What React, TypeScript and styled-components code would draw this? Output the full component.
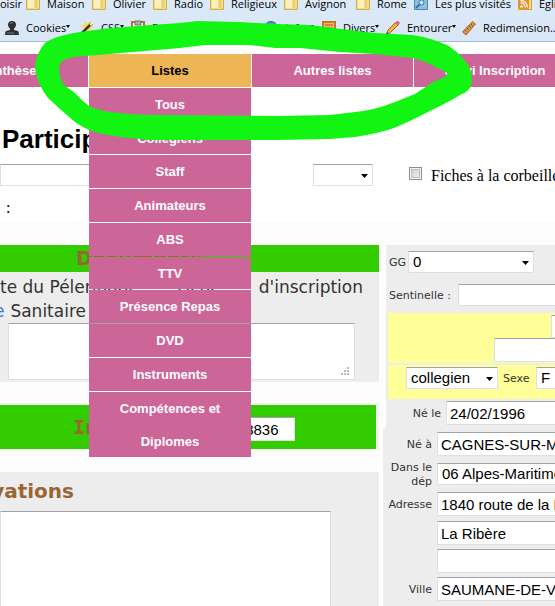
import React from "react";
import styled, { createGlobalStyle } from "styled-components";

const Global = createGlobalStyle`
  * { box-sizing: border-box; }
  html, body { margin: 0; height: 100%; overflow: hidden; background: #fff; }
  button, input, select, textarea { margin: 0; }
`;

const arial = '"Liberation Sans", Arial, sans-serif';
const verdana = '"DejaVu Sans", Verdana, sans-serif';

const Page = styled.div`
  position: relative;
  height: 100vh;
  overflow: hidden;
  background: #fff;
  font-family: ${arial};
`;

/* ---------- browser bookmarks ---------- */
const Bookmarks = styled.header`
  height: 42px;
  overflow: hidden;
  background: linear-gradient(#dce9f8, #d8e6f5);
  border-bottom: 1px solid #a5bbd6;
`;
const BookmarkRow = styled.div<{ $cols: string; $top?: boolean }>`
  display: grid;
  grid-template-columns: ${(p) => p.$cols};
  height: 20px;
  margin-top: ${(p) => (p.$top ? "-6px" : "4px")};
`;
const Bookmark = styled.button`
  display: flex;
  align-items: center;
  gap: 7px;
  min-width: 0;
  padding: 0;
  border: 0;
  background: none;
  color: #000;
  font: 11px/20px "Open Sans", "Noto Sans", sans-serif;
  white-space: nowrap;
  svg { flex: none; }
`;
const Caret = styled.span`
  display: inline-block;
  border: 2px solid transparent;
  border-top: 3px solid #000;
  border-bottom: 0;
  vertical-align: 4px;
`;

const Icon = ({ children }: { children: React.ReactNode }) => (
  <svg width="14" height="16" viewBox="0 0 14 16" aria-hidden="true">{children}</svg>
);
const Folder = () => (
  <Icon>
    <path d="M.5 2.500h9l1-2h3v13H.5z" fill="#f3dc86" stroke="#cfae4c" />
    <path d="M2 4h6v8H2z" fill="#fbf0bd" />
    <path d="M10 3v9" stroke="#e0c05e" />
  </Icon>
);
const Saved = () => (
  <Icon>
    <path d="M.5 2.500h9l1-2h3v13H.5z" fill="#8fc0e0" stroke="#4a86b4" />
    <circle cx="7.500" cy="6.500" r="2.500" fill="#d5ecf9" stroke="#37719f" />
    <path d="M5.500 8.500L2 12" stroke="#37719f" strokeWidth="2" />
  </Icon>
);
const Feed = () => (
  <Icon>
    <path d="M.5 2.500h9l1-2h3v13H.5z" fill="#f6df84" stroke="#c9a338" />
    <rect x="1" y="3" width="10" height="10" rx="1" fill="#ee8a2b" />
    <circle cx="3.500" cy="10.500" r="1.300" fill="#fff" />
    <path d="M2.500 7a4 4 0 0 1 4.500 4.500M2.500 4.500a7 7 0 0 1 7 7" fill="none" stroke="#fff" strokeWidth="1.300" />
  </Icon>
);
const Person = () => (
  <Icon>
    <path d="M7 1a4 4 0 0 1 4 4c0 2-2 3-2 4v1l4 1q1 1 1 4H0q0-3 1-4l4-1V9C5 8 3 7 3 5a4 4 0 0 1 4-4" fill="#2f3033" />
    <path d="M5 4q1-2 3-1M2 13h7" fill="none" stroke="#77797d" />
  </Icon>
);
const Wand = () => (
  <Icon>
    <path d="M5 1l2 3 4-3v4l3 2-4 2v4L7 10l-4 2 1-4-4-2 4-1z" fill="#ffd94d" />
    <path d="M1 14L12 3" stroke="#333" strokeWidth="2.500" />
    <path d="M10 5l3-3" stroke="#fff7cf" strokeWidth="2" />
  </Icon>
);
const Clipboard = () => (
  <Icon>
    <rect x="1" y="2" width="12" height="13" fill="#fff" stroke="#c66b30" strokeWidth="2" />
    <path d="M4 1h6v4H4z" fill="#a6adb5" stroke="#69727b" />
  </Icon>
);
const Info = () => (
  <Icon>
    <circle cx="7" cy="8" r="6.500" fill="#4d96da" stroke="#2465ad" />
    <path d="M7 7v5M7 4v1.500" stroke="#fff" strokeWidth="2" />
  </Icon>
);
const Box = () => (
  <Icon>
    <rect x="1" y="2" width="12" height="13" fill="#f5b76e" stroke="#c87426" strokeWidth="2" />
    <path d="M3 5h8M4 8h6" stroke="#a85b18" />
  </Icon>
);
const Pencil = () => (
  <Icon>
    <path d="M.5 14.500L2 10l8-8 2.500 2.500-8 8z" fill="#f7b04a" stroke="#a86217" />
    <path d="M9 3l2-2q2 0 3 2l-2 2.500z" fill="#dc6870" />
    <path d="M0 15l1-3 2 2z" fill="#333" />
  </Icon>
);
const Ruler = () => (
  <Icon>
    <path d="M.5 12L10.500 1.500l3 2.500L4 15z" fill="#dc924b" stroke="#a8632a" />
    <path d="M3 10l1.500 1.500M5 8l1.500 1.500M7 6l1.500 1.500M9 4l1.500 1.500" stroke="#8f4d1c" />
  </Icon>
);

/* ---------- site navigation ---------- */
const Nav = styled.nav`
  position: relative;
  z-index: 2;
  display: grid;
  grid-template-columns: 88px 162px 161px 162px;
  gap: 1px;
  height: 33px;
  margin-top: 12px;
`;
const NavCell = styled.div`
  position: relative;
  display: flex;
  justify-content: flex-end;
  min-width: 0;
`;
const NavLink = styled.a<{ $active?: boolean }>`
  flex: none;
  width: 100%;
  min-width: 161px;
  background: ${(p) => (p.$active ? "#edb556" : "#cc6699")};
  color: ${(p) => (p.$active ? "#000" : "#fff")};
  font: bold 13px/33px ${arial};
  text-align: center;
  text-decoration: none;
`;
const Menu = styled.ul`
  position: absolute;
  top: 34px;
  left: 0;
  display: grid;
  grid-template-rows: repeat(9, 1fr) 2fr;
  gap: 1px;
  width: 100%;
  height: 369px;
  margin: 0;
  padding: 0;
  list-style: none;
`;
const MenuItem = styled.li`
  min-height: 0;
  background: #cc6699;
`;
const MenuLink = styled.a`
  display: block;
  padding: 0 24px;
  color: #fff;
  font: bold 13px/33px ${arial};
  text-align: center;
  text-decoration: none;
`;
const Marker = styled.svg`
  position: absolute;
  top: 0;
  left: 0;
  z-index: 3;
  pointer-events: none;
`;

/* ---------- form parts ---------- */
const field = `
  flex: none;
  border: 1px solid #dcdfe6;
  border-top-color: #a0a2a8;
  border-radius: 1px;
  background-color: #fff;
  color: #000;
  font: 15px/20px ${arial};
  outline: 0;
`;
const TextInput = styled.input<{ $w: number; $h?: number }>`
  ${field}
  width: ${(p) => p.$w}px;
  height: ${(p) => p.$h ?? 24}px;
  padding: 0 3px;
`;
const SelectWrap = styled.span<{ $w: number }>`
  position: relative;
  display: block;
  flex: none;
  width: ${(p) => p.$w}px;
  height: 22px;
  svg { position: absolute; right: 5px; top: 10px; pointer-events: none; }
`;
const SelectBox = styled.select`
  ${field}
  display: block;
  width: 100%;
  height: 22px;
  padding: 0 4px;
  appearance: none;
`;
const Area = styled.textarea<{ $h: number }>`
  ${field}
  display: block;
  width: 100%;
  height: ${(p) => p.$h}px;
  resize: none;
`;

type SelectProps = { w: number; value: string; id?: string; label?: string };
const Select = ({ w, value, id, label }: SelectProps) => (
  <SelectWrap $w={w}>
    <SelectBox id={id} aria-label={label} defaultValue={value}>
      <option>{value}</option>
    </SelectBox>
    <svg width="7" height="4" viewBox="0 0 7 4" aria-hidden="true"><path d="M0 0h7L3.500 4z" fill="#000" /></svg>
  </SelectWrap>
);

const Title = styled.h1`
  margin: 37px 0 0;
  padding-left: 2px;
  font: bold 26px/30px ${arial};
`;
const Filters = styled.div`
  display: flex;
  align-items: center;
  height: 22px;
  margin-top: 10px;
`;
const FilterSelect = styled.div`
  margin: 0 36px 0 113px;
`;
const Check = styled.input`
  align-self: flex-start;
  appearance: none;
  width: 13px;
  height: 13px;
  margin-top: 2px !important;
  border: 1px solid #8e8f8f;
  background: linear-gradient(135deg, #c4c8cd, #f5f5f5);
  box-shadow: inset 0 0 0 1px #f4f4f4, inset 0 0 0 2px #b9bdc2;
`;
const CheckLabel = styled.label`
  display: flex;
  align-items: center;
  gap: 9px;
  padding-top: 2px;
  color: #000;
  font: 16px/22px "Liberation Serif", "Times New Roman", serif;
  white-space: nowrap;
`;
const Colon = styled.p`
  margin: 11px 0 0;
  padding-left: 6px;
  font: 16px/22px "Liberation Serif", "Times New Roman", serif;
`;
const Main = styled.main`
  display: grid;
  grid-template-columns: 379px minmax(0, 1fr);
  gap: 7px;
  align-items: start;
  margin-top: 3px;
  padding-top: 23px;
  background: #fdfdfd;
`;
const Left = styled.div`
  min-width: 0;
`;
const GreenBar = styled.div`
  height: 27px;
  padding-left: 76px;
  background: #33cc00;
`;
const BarTitle = styled.h2<{ $mono?: boolean }>`
  flex: none;
  margin: 0;
  color: #996633;
  font: bold 20px/27px ${(p) => (p.$mono ? '"DejaVu Sans Mono", monospace' : verdana)};
  white-space: nowrap;
`;
const Documents = styled.section`
  height: 110px;
  overflow: hidden;
  padding-top: 3px;
  background: #ededed;
`;
const DocLine = styled.p`
  display: flex;
  justify-content: space-between;
  width: 363px;
  margin: 0;
  color: #333;
  font: 17px/24px ${verdana};
  white-space: nowrap;
`;
const DocSecond = styled(DocLine)`
  justify-content: flex-end;
  gap: 6px;
  width: 86px;
`;
const DocLink = styled.a`
  color: #3377cc;
  text-decoration: none;
`;
const NoteBox = styled.div`
  position: relative;
  width: 347px;
  margin-left: 8px;
  svg { position: absolute; right: 5px; bottom: 4px; }
`;
const Registration = styled.section`
  display: flex;
  align-items: center;
  height: 47px;
  margin-top: 21px;
  padding-left: 73px;
  background: #33cc00;
  border: solid #f1f1f1;
  border-width: 2px 3px 1px 0;
`;
const RegInput = styled.div`
  margin: 4px 0 0 19px;
`;
const Notes = styled.section`
  margin-top: 22px;
  height: 134px;
  background: #ededed;
`;
const NotesTitle = styled.h2`
  display: flex;
  justify-content: flex-end;
  width: 74px;
  margin: 0;
  color: #996633;
  font: bold 20px/39px ${verdana};
`;
const NotesArea = styled.div`
  width: 331px;
`;
const Right = styled.div`
  min-width: 0;
  overflow: hidden;
  margin-left: -3px;
`;
const Upper = styled.div`
  display: flow-root;
  margin-left: 3px;
  padding-top: 6px;
  background: #ededed;
`;
const Lower = styled.div`
  display: grid;
  gap: 3px;
  height: 190px;
  align-content: start;
  padding-top: 4px;
  background: #ededed;
`;
const FieldRow = styled.div<{ $pad?: number; $gap?: number; $mb?: number }>`
  display: flex;
  align-items: center;
  gap: ${(p) => p.$gap ?? 5}px;
  padding-left: ${(p) => p.$pad ?? 0}px;
  margin-bottom: ${(p) => p.$mb ?? 0}px;
`;
const Label = styled.label<{ $w?: number; $right?: boolean }>`
  flex: none;
  width: ${(p) => (p.$w ? `${p.$w}px` : "auto")};
  padding-top: 2px;
  color: #333;
  font: 11px/14px ${verdana};
  text-align: ${(p) => (p.$right ? "right" : "left")};
`;
const Yellow = styled.div<{ $h: number }>`
  height: ${(p) => p.$h}px;
  margin: 0 0 2px 2px;
  padding-top: 2px;
  background: #ffff99;
`;

const menu = ["Tous", "Collégiens", "Staff", "Animateurs", "ABS", "TTV", "Présence Repas", "DVD", "Instruments", "Compétences et Diplomes"];
const folders: [string, React.FC][] = [
  ["Maison", Folder], ["Olivier", Folder], ["Radio", Folder], ["Religieux", Folder], ["Avignon", Folder],
  ["Rome", Folder], ["Les plus visités", Saved], ["Eglise", Feed],
];
const tools: [string, React.FC][] = [
  ["Cookies", Person], ["CSS", Wand], ["Formulaires", Clipboard], ["Infos", Info],
  ["Divers", Box], ["Entourer", Pencil], ["Redimension...", Ruler],
];

export default function App() {
  return (
    <Page>
      <Global />
      <Bookmarks>
        <BookmarkRow $top $cols="26px 66px 61px 57px 74px 72px 58px 104px 1fr">
          <Bookmark>oisir</Bookmark>
          {folders.map(([name, Glyph]) => <Bookmark key={name}><Glyph />{name}</Bookmark>)}
        </BookmarkRow>
        <BookmarkRow $cols="5px 75px 51px 133px 58px 64px 76px 1fr">
          <span />
          {tools.map(([name, Glyph]) => (
            <Bookmark key={name}><Glyph /><span>{name}{name !== "Redimension..." && <Caret />}</span></Bookmark>
          ))}
        </BookmarkRow>
      </Bookmarks>

      <Nav>
        <NavCell><NavLink href="#synthese">Synthèse</NavLink></NavCell>
        <NavCell>
          <NavLink href="#listes" $active>Listes</NavLink>
          <Menu>
            {menu.map((m) => <MenuItem key={m}><MenuLink href="#liste">{m}</MenuLink></MenuItem>)}
          </Menu>
        </NavCell>
        <NavCell><NavLink href="#autres">Autres listes</NavLink></NavCell>
        <NavCell><NavLink href="#suivi">Suivi Inscription</NavLink></NavCell>
      </Nav>

      <Title>Participants</Title>
      <Filters>
        <TextInput $w={200} $h={22} aria-label="Recherche" />
        <FilterSelect><Select w={60} value="" label="Filtre" /></FilterSelect>
        <CheckLabel><Check type="checkbox" />Fiches à la corbeille</CheckLabel>
      </Filters>
      <Colon>:</Colon>

      <Main>
        <Left>
          <GreenBar><BarTitle>Documents</BarTitle></GreenBar>
          <Documents>
            <DocLine><span>te du Pélerinage</span><span>Fiche</span><span>d'inscription</span></DocLine>
            <DocSecond><DocLink href="#fiche">Fiche</DocLink><span>Sanitaire</span></DocSecond>
            <NoteBox>
              <Area $h={57} aria-label="Documents" />
              <svg width="9" height="9" viewBox="0 0 9 9" aria-hidden="true">
                <path d="M6 0h2v2H6zM3 3h2v2H3zM6 3h2v2H6zM0 6h2v2H0zM3 6h2v2H3zM6 6h2v2H6z" fill="#bbb" />
              </svg>
            </NoteBox>
          </Documents>
          <Registration>
            <BarTitle $mono>Inscription</BarTitle>
            <RegInput><TextInput $w={71} defaultValue="333836" aria-label="Inscription" /></RegInput>
          </Registration>
          <Notes>
            <NotesTitle>Observations</NotesTitle>
            <NotesArea><Area $h={110} aria-label="Observations" /></NotesArea>
          </Notes>
        </Left>

        <Right>
          <Upper>
            <FieldRow $pad={3} $gap={1} $mb={11}>
              <Label htmlFor="gg" $w={18}>GG</Label><Select id="gg" w={126} value="0" />
            </FieldRow>
            <FieldRow $pad={3} $mb={7}>
              <Label htmlFor="sentinelle" $w={64}>Sentinelle :</Label><TextInput id="sentinelle" $w={200} $h={22} />
            </FieldRow>
            <Yellow $h={50}>
              <FieldRow $pad={163}><TextInput $w={150} $h={23} aria-label="Nom" /></FieldRow>
              <FieldRow $pad={106}><TextInput $w={200} aria-label="Prénom" /></FieldRow>
            </Yellow>
            <Yellow $h={34}>
              <FieldRow $pad={18}>
                <Select w={92} value="collegien" label="Statut" />
                <Label htmlFor="sexe" $w={28}>Sexe</Label>
                <Select id="sexe" w={60} value="F" />
              </FieldRow>
            </Yellow>
            <FieldRow $mb={3}>
              <Label htmlFor="nele" $w={55} $right>Né le</Label><TextInput id="nele" $w={150} defaultValue="24/02/1996" />
            </FieldRow>
          </Upper>
          <Lower>
            <FieldRow>
              <Label htmlFor="nea" $w={49} $right>Né à</Label><TextInput id="nea" $w={220} defaultValue="CAGNES-SUR-MER" />
            </FieldRow>
            <FieldRow>
              <Label htmlFor="dep" $w={49} $right>Dans le dép</Label><Select id="dep" w={220} value="06 Alpes-Maritimes" />
            </FieldRow>
            <FieldRow $mb={2}>
              <Label htmlFor="adr" $w={49} $right>Adresse</Label><TextInput id="adr" $w={220} defaultValue="1840 route de la Fontaine" />
            </FieldRow>
            <FieldRow $pad={54} $mb={1}><TextInput $w={220} defaultValue="La Ribère" aria-label="Adresse 2" /></FieldRow>
            <FieldRow $pad={54} $mb={1}><TextInput $w={220} aria-label="Adresse 3" /></FieldRow>
            <FieldRow>
              <Label htmlFor="ville" $w={49} $right>Ville</Label><TextInput id="ville" $w={220} defaultValue="SAUMANE-DE-VAUCLUSE" />
            </FieldRow>
          </Lower>
        </Right>
      </Main>

      <Marker width="480" height="150" viewBox="0 0 480 150" aria-hidden="true">
        <path
          fill="#12f512"
          fillRule="evenodd"
          d="M35 68Q36 53 45 43Q54 36 80 32L110 28L150 25L180 23L197 21L240 22L275 24L310 25L333 28L375 33L412 35Q433 38 449 46Q462 55 470 68Q473 78 471 86Q468 92 462 94L448 102L430 111L412 120L394 128Q376 134 355 137L330 139L275 140L150 140L130 138Q110 136 95 132Q83 128 75 122L60 109L48 98Q37 84 35 68Z
          M59 68Q59 62 66 59Q75 56 85 56L110 54L145 51L180 48L205 45L250 45L275 48L300 48L340 52L375 54L412 58Q426 61 437 68L445 71Q449 74 445 77L433 82L415 94L395 102Q375 110 355 112L330 115L275 116L150 115Q130 115 110 112Q98 110 89 106Q82 101 75 93L64 85Q59 77 59 68Z"
        />
      </Marker>
    </Page>
  );
}
